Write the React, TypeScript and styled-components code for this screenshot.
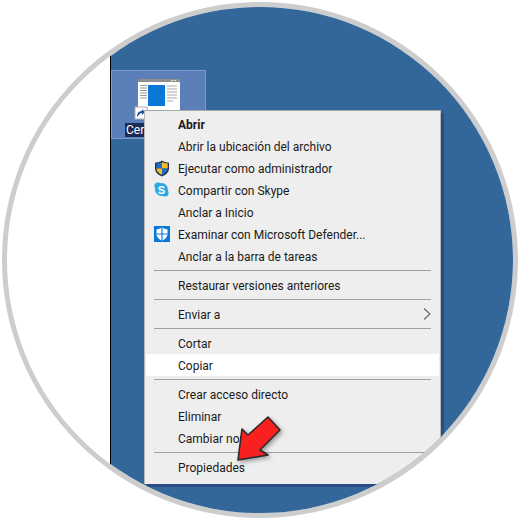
import React from 'react';
import styled, { createGlobalStyle } from 'styled-components';

const GlobalStyle = createGlobalStyle`
  html, body {
    margin: 0;
    padding: 0;
    background: #ffffff;
  }
`;

const Scene = styled.div`
  width: 520px;
  height: 520px;
  display: flex;
  align-items: center;
  justify-content: center;
  overflow: hidden;
`;

const Circle = styled.div`
  width: 516px;
  height: 516px;
  box-sizing: border-box;
  border: 5px solid #cdcdcd;
  border-radius: 50%;
  overflow: hidden;
  display: flex;
  background: #ffffff;
  position: relative;
`;

const Blank = styled.div`
  width: 103px;
  flex-shrink: 0;
`;

const Desktop = styled.div`
  flex: 1;
  position: relative;
  background: #336699;
  border-left: 1px solid #000000;
  padding-top: 63px;
`;

const IconTile = styled.div`
  width: 95px;
  height: 69px;
  box-sizing: border-box;
  background: #5b80b9;
  border: 1px solid #7c9bcb;
  display: flex;
  flex-direction: column;
  align-items: center;
  padding-top: 8px;
`;

const IconLabel = styled.span`
  align-self: flex-start;
  margin: 4px 0 0 13px;
  padding: 0 1px;
  font: 12px/14px Roboto, sans-serif;
  color: #ffffff;
  background: #1c2c58;
`;

const Menu = styled.div`
  position: absolute;
  left: 33px;
  top: 103px;
  width: 297px;
  height: 374px;
  box-sizing: border-box;
  background: #eeeeee;
  border-top: 1px solid #a8a8a8;
  border-left: 1px solid #b8b8b8;
  border-right: 1px solid #b8b8b8;
  padding: 2px 1px 0;
  box-shadow: 3px 3px 0 #2b4d84;
`;

const Row = styled.div<{ $active?: boolean; $bold?: boolean }>`
  height: 22px;
  box-sizing: border-box;
  display: flex;
  align-items: center;
  position: relative;
  padding: 2px 0 0 32px;
  background: ${props => (props.$active ? '#ffffff' : 'transparent')};
  font: ${props => (props.$bold ? 700 : 400)} 12px/20px Roboto, sans-serif;
  color: #1a1a1a;
`;

const RowIcon = styled.span`
  position: absolute;
  left: 8px;
  top: 3px;
  width: 16px;
  height: 16px;
  display: flex;
`;

const Chevron = styled.svg`
  position: absolute;
  right: 8px;
  top: 5px;
`;

const Separator = styled.div`
  height: 7px;
  display: flex;
  align-items: center;
  padding: 0 8px;

  &::after {
    content: '';
    flex: 1;
    height: 1px;
    background: #a0a0a0;
    margin-top: -1px;
  }
`;

const Arrow = styled.svg`
  position: absolute;
  left: 122px;
  top: 405px;
  filter: drop-shadow(2px 2px 2px rgba(0, 0, 0, 0.35));
`;

const FileSvg = styled.svg`
  overflow: visible;
  flex-shrink: 0;
`;

const FileIcon = () => (
  <FileSvg width="42" height="40" viewBox="0 0 42 40">
    <rect x="0" y="0" width="42" height="32" fill="#ffffff" />
    <rect x="0" y="0" width="42" height="3" fill="#8f8f8f" />
    <rect x="33" y="1" width="2" height="1" fill="#e0e0e0" />
    <rect x="36" y="1" width="2" height="1" fill="#e0e0e0" />
    <rect x="10" y="6" width="17" height="21" fill="#0a78d7" />
    <path d="M2 6.500h7M2 9h7M2 11.500h7M2 14h7M2 16.500h7M2 19h7" stroke="#9a9a9a" strokeWidth="1.200" />
    <path d="M29 7h10M29 10h10M29 13h10M29 16h10M29 19h10M29 22h6" stroke="#a8a8a8" strokeWidth="1" />
    <rect x="-3" y="28" width="12" height="12" fill="#ffffff" stroke="#b0b0b0" />
    <path d="M-1 38c0-4 2-6 5-6v-2l3 3-3 3v-2c-2 0-3 2-5 4z" fill="#20508f" />
  </FileSvg>
);

const UacShield = () => (
  <svg width="16" height="17" viewBox="0 0 16 17">
    <path d="M8 .5c2 1.400 4.500 2 7 2v6c0 3.500-3 6.500-7 8-4-1.500-7-4.500-7-8v-6c2.500 0 5-.6 7-2z" fill="#27324f" />
    <path d="M8 2v6.500H2.300V3.500C4.300 3.400 6.300 3 8 2z" fill="#1f6fc4" />
    <path d="M8 2c1.700 1 3.700 1.400 5.700 1.500v5H8z" fill="#f2bd2c" />
    <path d="M2.300 8.500H8v6.300c-3-1.200-5.400-3.500-5.700-6.300z" fill="#f2bd2c" />
    <path d="M8 8.500h5.700c-.3 2.800-2.700 5.100-5.700 6.300z" fill="#1f6fc4" />
  </svg>
);

const SkypeBadge = () => (
  <svg width="15" height="15" viewBox="0 0 15 15">
    <circle cx="4" cy="4" r="3.600" fill="#29a9e6" />
    <circle cx="11" cy="11" r="3.600" fill="#29a9e6" />
    <circle cx="7.500" cy="7.500" r="6.500" fill="#29a9e6" />
    <text x="7.500" y="11.500" textAnchor="middle" fontFamily="'Liberation Sans', sans-serif" fontWeight="700" fontSize="11" fill="#ffffff">S</text>
  </svg>
);

const DefenderShield = () => (
  <svg width="16" height="16" viewBox="0 0 16 16">
    <rect width="16" height="16" fill="#0a78d7" />
    <path d="M8 1.500c1.800 1.100 3.800 1.700 5.500 1.800v5c0 2.900-2.300 5-5.500 6.500-3.200-1.500-5.500-3.600-5.500-6.500v-5C4.200 3.200 6.200 2.600 8 1.500z" fill="#ffffff" />
    <path d="M8 1.500v13.300M2.500 8h11" stroke="#0a78d7" strokeWidth="1.200" />
  </svg>
);

type Item = { label: string; bold?: boolean; active?: boolean; icon?: React.ReactNode; more?: boolean };

const groups: Item[][] = [
  [
    { label: 'Abrir', bold: true },
    { label: 'Abrir la ubicación del archivo' },
    { label: 'Ejecutar como administrador', icon: <UacShield /> },
    { label: 'Compartir con Skype', icon: <SkypeBadge /> },
    { label: 'Anclar a Inicio' },
    { label: 'Examinar con Microsoft Defender...', icon: <DefenderShield /> },
    { label: 'Anclar a la barra de tareas' },
  ],
  [{ label: 'Restaurar versiones anteriores' }],
  [{ label: 'Enviar a', more: true }],
  [{ label: 'Cortar' }, { label: 'Copiar', active: true }],
  [{ label: 'Crear acceso directo' }, { label: 'Eliminar' }, { label: 'Cambiar nombre' }],
  [{ label: 'Propiedades' }],
];

const App: React.FC = () => {
  return (
    <Scene>
      <GlobalStyle />
      <Circle>
        <Blank />
        <Desktop>
          <IconTile>
            <FileIcon />
            <IconLabel>Cer</IconLabel>
          </IconTile>
          <Menu>
            {groups.map((group, i) => (
              <React.Fragment key={i}>
                {i > 0 && <Separator />}
                {group.map(item => (
                  <Row key={item.label} $bold={item.bold} $active={item.active}>
                    {item.icon && <RowIcon>{item.icon}</RowIcon>}
                    {item.label}
                    {item.more && (
                      <Chevron width="8" height="12" viewBox="0 0 8 12">
                        <path d="M1 .5 7 6 1 11.500" fill="none" stroke="#6a6a6a" strokeWidth="1.200" />
                      </Chevron>
                    )}
                  </Row>
                ))}
              </React.Fragment>
            ))}
          </Menu>
          <Arrow width="50" height="50" viewBox="0 0 50 50">
            <path
              d="M5 48 L9 17 L15 23 L35 5 L47 18 L27 38 L35 43 Z"
              fill="#f92020"
              stroke="#2a2a2a"
              strokeWidth="1.600"
              strokeLinejoin="round"
            />
          </Arrow>
        </Desktop>
      </Circle>
    </Scene>
  );
};

export default App;
